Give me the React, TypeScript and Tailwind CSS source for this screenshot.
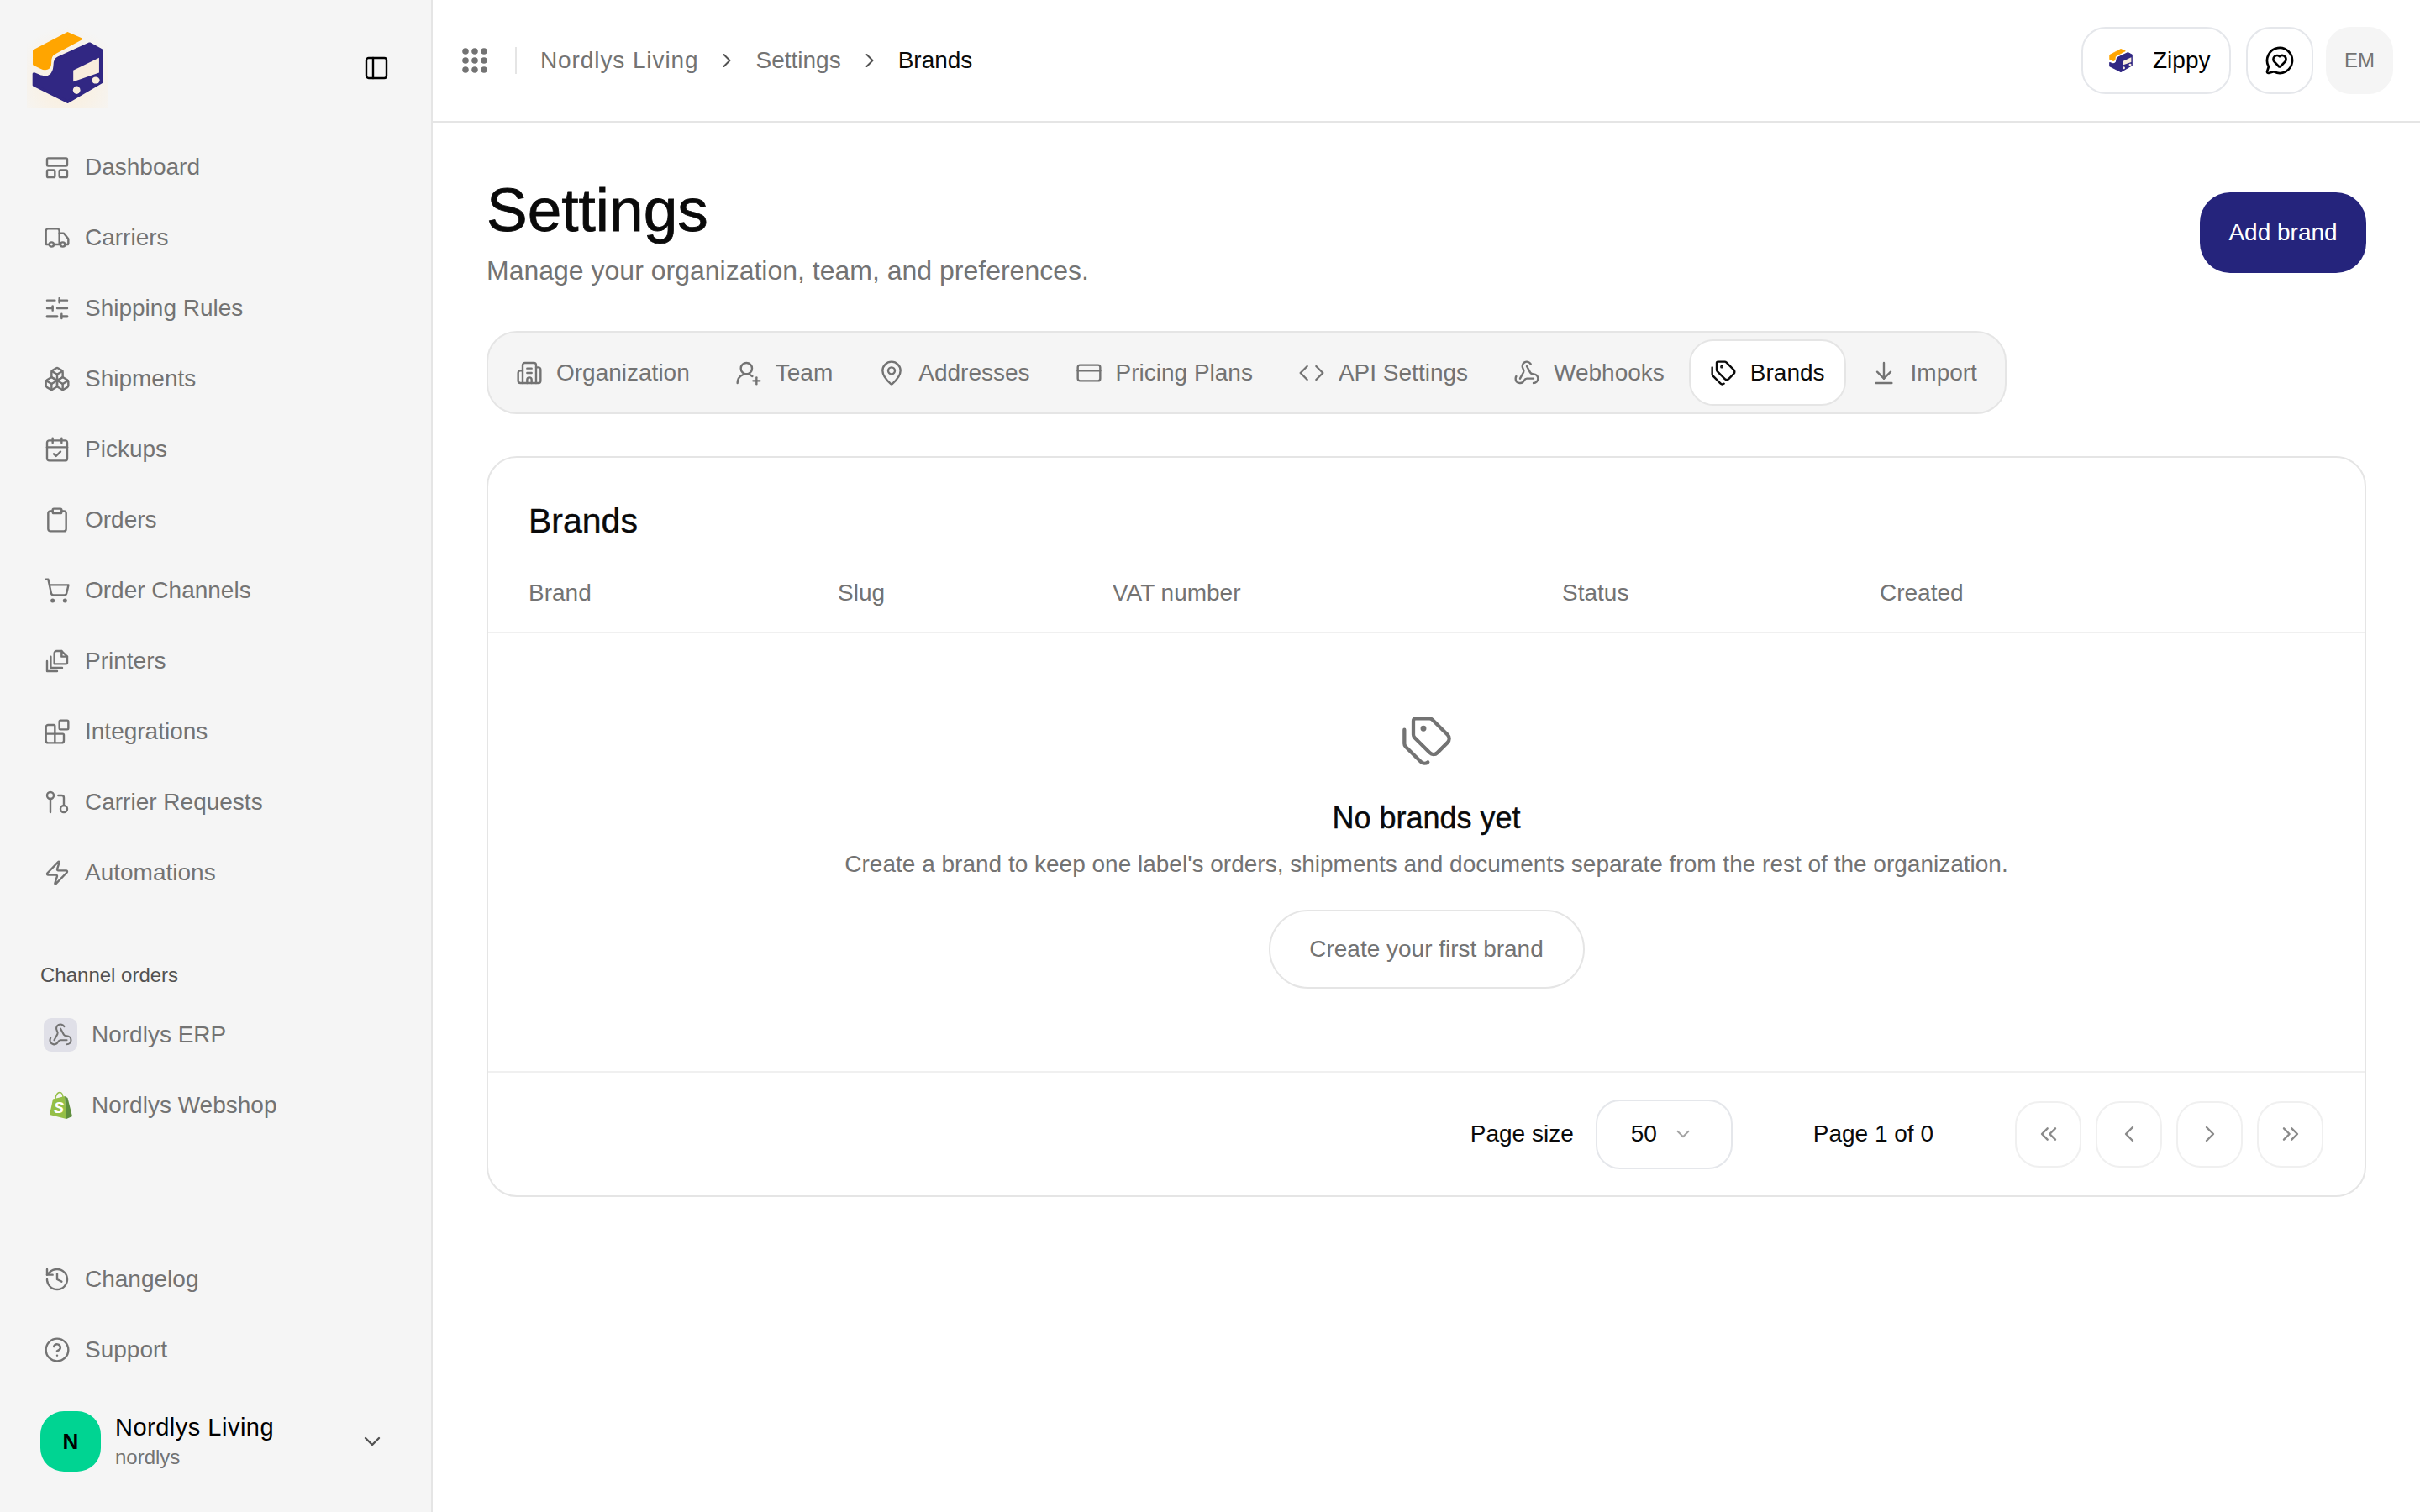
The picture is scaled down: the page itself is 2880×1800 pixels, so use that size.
import React from 'react';
import {
  ArrowDownToLine, Blocks, Boxes, Building2, CalendarCheck, ChevronDown, ChevronLeft, ChevronRight,
  ChevronsLeft, ChevronsRight, CircleHelp, Clipboard, Code, CreditCard, GitPullRequest, History,
  MapPin, MessageCircleHeart, PanelLeft, ShoppingCart, SlidersHorizontal, Tags, Truck, UserRoundPlus,
  Webhook, Zap,
} from 'lucide-react';

const LayoutIcon = (props: { size?: number; strokeWidth?: number }) => (
  <svg width={props.size} height={props.size} viewBox="0 0 24 24" fill="none" stroke="currentColor" strokeWidth={props.strokeWidth} strokeLinejoin="round">
    <rect x="3" y="4" width="18" height="7" rx="1" />
    <rect x="3" y="14.5" width="7" height="6.5" rx="1" />
    <rect x="14" y="14.5" width="7" height="6.5" rx="1" />
  </svg>
);

const PrintersIcon = (props: { size?: number; strokeWidth?: number }) => (
  <svg width={props.size} height={props.size} viewBox="0 0 24 24" fill="none" stroke="currentColor" strokeWidth={props.strokeWidth} strokeLinecap="round" strokeLinejoin="round">
    <path d="M9.5 14.5V5a2 2 0 0 1 2-2H16l5 5v5.5a1 1 0 0 1-1 1z" />
    <path d="M16 3v5h5" />
    <path d="M6.3 8v10h10.2" />
    <path d="M3 12v9h9" />
  </svg>
);

const Logo = ({ size, halo }: { size: number; halo?: boolean }) => (
  <svg width={size} height={size} viewBox="95 95 290 290">
    {halo && (
      <>
        <defs>
          <radialGradient id="logoHalo" cx="50%" cy="70%" r="70%">
            <stop offset="0%" stopColor="#fbeeda" />
            <stop offset="100%" stopColor="#f5f5f5" />
          </radialGradient>
        </defs>
        <rect x="95" y="95" width="290" height="290" fill="url(#logoHalo)" />
      </>
    )}
    <path
      d="M120 180L240 117L288 138L200 185C180 195 178 205 178 225C178 245 160 248 145 240L120 228Z"
      fill="#ffa500" stroke="#ffa500" strokeWidth="8" strokeLinejoin="round"
    />
    <path
      d="M318 155L360 178V292L240 362L120 302V262L145 272C175 282 192 262 194 235C194 215 198 210 208 205Z"
      fill="#312783" stroke="#312783" strokeWidth="10" strokeLinejoin="round"
    />
    <path d="M260 250L352 205V258L260 290Z" fill="#f8eddd" />
    <ellipse cx="272" cy="320" rx="13" ry="14" fill="#f8eddd" />
    <ellipse cx="340" cy="285" rx="14" ry="12" fill="#f8eddd" />
  </svg>
);

const ShopifyIcon = () => (
  <svg width="30" height="34" viewBox="0 0 30 34">
    <path d="M2 28L6 9.5L20 6L22 33Z" fill="#95bf47" />
    <path d="M20 6L23.5 8L29 30L22 33Z" fill="#5e8e3e" />
    <path d="M9 10C9 4 12 1.5 14 1.5C16.5 1.5 18 4.5 18 8" fill="none" stroke="#95bf47" strokeWidth="1.5" />
    <text x="7" y="26" fontFamily="Liberation Sans, sans-serif" fontSize="18" fontWeight="700" fontStyle="italic" fill="#ffffff">S</text>
  </svg>
);

const NAV_ITEMS = [
  { label: 'Dashboard', icon: LayoutIcon },
  { label: 'Carriers', icon: Truck },
  { label: 'Shipping Rules', icon: SlidersHorizontal },
  { label: 'Shipments', icon: Boxes },
  { label: 'Pickups', icon: CalendarCheck },
  { label: 'Orders', icon: Clipboard },
  { label: 'Order Channels', icon: ShoppingCart },
  { label: 'Printers', icon: PrintersIcon },
  { label: 'Integrations', icon: Blocks },
  { label: 'Carrier Requests', icon: GitPullRequest },
  { label: 'Automations', icon: Zap },
];

const TABS = [
  { label: 'Organization', icon: Building2 },
  { label: 'Team', icon: UserRoundPlus },
  { label: 'Addresses', icon: MapPin },
  { label: 'Pricing Plans', icon: CreditCard },
  { label: 'API Settings', icon: Code },
  { label: 'Webhooks', icon: Webhook },
  { label: 'Brands', icon: Tags, active: true },
  { label: 'Import', icon: ArrowDownToLine },
];

const COLUMNS = ['Brand', 'Slug', 'VAT number', 'Status', 'Created'];

const NavRow = ({ label, icon: Icon }: { label: string; icon: React.ElementType }) => (
  <div className="flex h-[84px] items-center gap-[17px] pl-[52px] text-[28px] text-[#737373]">
    <Icon size={32} strokeWidth={1.8} />
    <span>{label}</span>
  </div>
);

const PagerButton = ({ children }: { children: React.ReactNode }) => (
  <button className="flex h-[79px] w-[79px] items-center justify-center rounded-[29px] border-2 border-[#f0f0f0] text-[#8a8a8a]">
    {children}
  </button>
);

const App: React.FC = () => {
  return (
    <div className="flex h-[1800px] w-[2880px] overflow-hidden bg-white font-['Liberation_Sans',sans-serif] text-[#0a0a0a]">
      <aside className="flex w-[515px] shrink-0 flex-col border-r-2 border-[#e5e5e5] bg-[#f5f5f5] pb-[48px]">
        <div className="flex items-center justify-between pt-[32px] pb-[28px] pl-[32px] pr-[49px]">
          <Logo size={97} halo />
          <PanelLeft size={32} strokeWidth={1.8} className="text-black" />
        </div>

        <nav>
          {NAV_ITEMS.map((item) => (
            <NavRow key={item.label} label={item.label} icon={item.icon} />
          ))}
        </nav>

        <div className="mt-[63px] pl-[48px] text-[24px] leading-[34px] text-[#525252]">Channel orders</div>
        <div className="mt-[12px] flex h-[84px] items-center gap-[17px] pl-[52px] text-[28px] text-[#737373]">
          <span className="flex h-[40px] w-[40px] items-center justify-center rounded-[9px] bg-[#e0e0e8]">
            <Webhook size={30} strokeWidth={1.7} />
          </span>
          <span>Nordlys ERP</span>
        </div>
        <div className="flex h-[84px] items-center gap-[17px] pl-[52px] text-[28px] text-[#737373]">
          <span className="flex h-[40px] w-[40px] items-center justify-center">
            <ShopifyIcon />
          </span>
          <span>Nordlys Webshop</span>
        </div>

        <div className="mt-auto">
          <NavRow label="Changelog" icon={History} />
          <NavRow label="Support" icon={CircleHelp} />
        </div>
        <div className="mt-[31px] flex items-center pl-[48px] pr-[54px]">
          <div className="flex h-[72px] w-[72px] items-center justify-center rounded-[28px] bg-[#00d492] text-[26px] font-bold text-black">N</div>
          <div className="ml-[17px] flex-1">
            <div className="text-[29px] leading-[38px] tracking-[0.5px] text-black">Nordlys Living</div>
            <div className="text-[24px] leading-[34px] text-[#737373]">nordlys</div>
          </div>
          <ChevronDown size={32} strokeWidth={1.8} className="text-[#525252]" />
        </div>
      </aside>

      <main className="min-w-0 flex-1">
        <header className="flex h-[146px] items-center border-b-2 border-[#e5e5e5] pl-[34px] pr-[32px]">
          <svg width="32" height="32" viewBox="0 0 32 32" fill="#737373">
            {[5, 16, 27].map((cy) =>
              [5, 16, 27].map((cx) => <circle key={`${cx}-${cy}`} cx={cx} cy={cy} r="3.8" />)
            )}
          </svg>
          <div className="ml-[32px] h-[32px] w-[2px] bg-[#e5e5e5]" />
          <nav className="ml-[28px] flex items-center text-[28px] text-[#737373]">
            <span className="tracking-[0.9px]">Nordlys Living</span>
            <ChevronRight size={28} strokeWidth={1.7} className="ml-[20px] mr-[20px] text-[#525252]" />
            <span>Settings</span>
            <ChevronRight size={28} strokeWidth={1.7} className="ml-[20px] mr-[20px] text-[#525252]" />
            <span className="text-[#0a0a0a]">Brands</span>
          </nav>
          <div className="ml-auto flex items-center">
            <button className="flex h-[80px] w-[178px] items-center gap-[22px] rounded-[29px] border-2 border-[#e5e7eb] pl-[29px] text-[28px] text-black">
              <Logo size={32} />
              <span>Zippy</span>
            </button>
            <button className="ml-[18px] flex h-[80px] w-[80px] items-center justify-center rounded-[29px] border-2 border-[#e5e7eb] text-black">
              <MessageCircleHeart size={36} strokeWidth={1.8} />
            </button>
            <div className="ml-[15px] flex h-[80px] w-[80px] items-center justify-center rounded-[29px] bg-[#f5f5f5] text-[24px] text-[#737373]">EM</div>
          </div>
        </header>

        <div className="px-[64px] pt-[64px]">
          <div className="flex items-center justify-between">
            <div>
              <h1 className="text-[73px] leading-[80px] [-webkit-text-stroke:0.8px_#0a0a0a]">Settings</h1>
              <p className="mt-[10px] text-[32px] leading-[44px] text-[#737373]">Manage your organization, team, and preferences.</p>
            </div>
            <button className="flex h-[96px] w-[198px] items-center justify-center rounded-[36px] bg-[#25247c] text-[28px] text-white">Add brand</button>
          </div>

          <div className="mt-[50px] flex h-[99px] w-fit items-center gap-[4px] rounded-[36px] border-2 border-[#e5e5e5] bg-[#f5f5f5] px-[8px]">
            {TABS.map((tab) => (
              <div
                key={tab.label}
                className={`flex h-[79px] items-center gap-[16px] rounded-[29px] border-2 px-[23px] text-[28px] ${
                  tab.active ? 'border-[#e5e5e5] bg-white text-[#0a0a0a]' : 'border-transparent text-[#737373]'
                }`}
              >
                <tab.icon size={32} strokeWidth={1.8} />
                <span>{tab.label}</span>
              </div>
            ))}
          </div>

          <section className="mt-[50px] rounded-[36px] border-2 border-[#e5e5e5]">
            <h2 className="px-[48px] pt-[50px] text-[41px] leading-[50px] [-webkit-text-stroke:0.4px_#0a0a0a]">Brands</h2>
            <div className="mt-[17px] grid h-[92px] grid-cols-[368px_327px_535px_378px_1fr] items-center border-b-2 border-[#f0f0f0] px-[48px] pb-[2px] text-[28px] text-[#737373]">
              {COLUMNS.map((col) => (
                <span key={col}>{col}</span>
              ))}
            </div>

            <div className="flex h-[521px] flex-col items-center pt-[96px]">
              <Tags size={64} strokeWidth={1.6} className="text-[#737373]" />
              <h3 className="mt-[35px] text-[36px] leading-[50px] [-webkit-text-stroke:0.4px_#0a0a0a]">No brands yet</h3>
              <p className="mt-[10px] text-[28px] leading-[40px] text-[#737373]">
                Create a brand to keep one label's orders, shipments and documents separate from the rest of the organization.
              </p>
              <button className="mt-[34px] h-[94px] w-[376px] rounded-[47px] border-2 border-[#e5e5e5] text-[28px] text-[#737373]">
                Create your first brand
              </button>
            </div>

            <div className="flex h-[148px] items-center justify-end border-t-2 border-[#f0f0f0] pr-[49px] text-[28px]">
              <span>Page size</span>
              <div className="ml-[26px] flex h-[83px] w-[163px] items-center rounded-[29px] border-2 border-[#e5e7eb] pl-[40px]">
                <span>50</span>
                <ChevronDown size={26} strokeWidth={1.8} className="ml-[18px] text-[#a3a3a3]" />
              </div>
              <span className="ml-[96px]">Page 1 of 0</span>
              <div className="ml-[97px] flex gap-[17px]">
                <PagerButton><ChevronsLeft size={32} strokeWidth={1.8} /></PagerButton>
                <PagerButton><ChevronLeft size={32} strokeWidth={1.8} /></PagerButton>
                <PagerButton><ChevronRight size={32} strokeWidth={1.8} /></PagerButton>
                <PagerButton><ChevronsRight size={32} strokeWidth={1.8} /></PagerButton>
              </div>
            </div>
          </section>
        </div>
      </main>
    </div>
  );
};

export default App;
